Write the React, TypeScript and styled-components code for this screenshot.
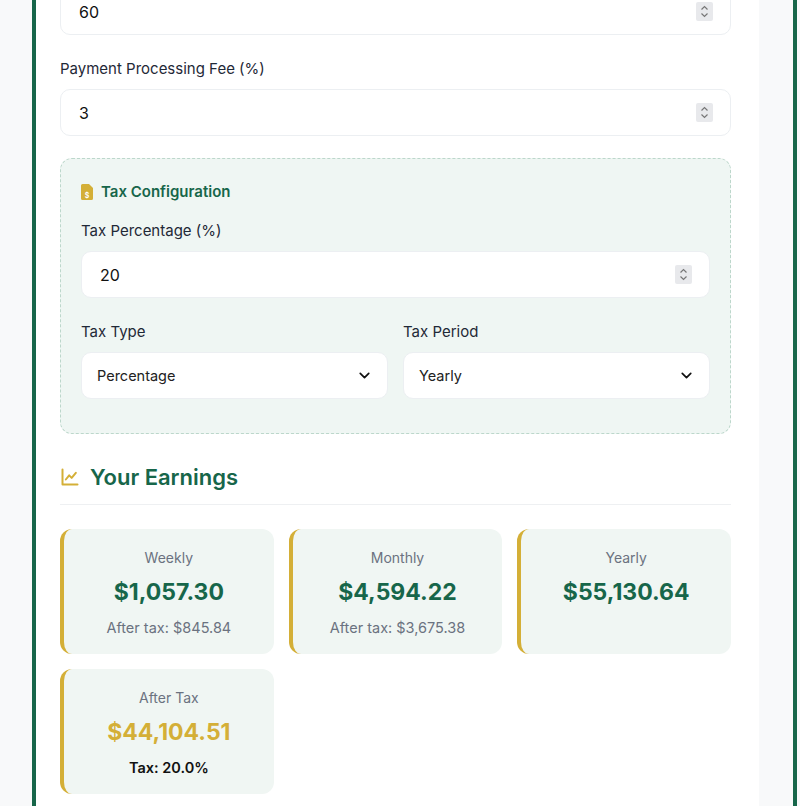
import styled, { createGlobalStyle } from 'styled-components'

const Global = createGlobalStyle`
  body { margin: 0; background: #f8f9fa; font-family: Inter, "Noto Sans", sans-serif; color: #1f2937; }
`

const Frame = styled.div`
  margin: -12px 3px 0 32px;
  border-left: 4px solid #17664a;
  border-right: 4px solid #17664a;
  background: #f8f9fa;
`

const Card = styled.div`
  background: #fff;
  margin-right: 34px;
  padding: 0 28px 0 24px;
  height: 830px;
  overflow: hidden;
`

const Field = styled.div<{ $gap?: number }>`
  margin-bottom: ${p => p.$gap ?? 22}px;
`

const Label = styled.div`
  font-size: 15px;
  font-weight: 400;
  color: #1f2937;
  margin-bottom: 11px;
`

const InputBox = styled.div`
  height: 47px;
  box-sizing: border-box;
  border: 1px solid #eceff2;
  border-radius: 10px;
  background: #fff;
  display: flex;
  align-items: center;
  justify-content: space-between;
  padding: 0 17px 0 18px;
  font-size: 16px;
  color: #111;
`

const Spinner = styled.span`
  width: 17px;
  height: 19px;
  background: #e8e9ec;
  border-radius: 2px;
  display: flex;
  align-items: center;
  justify-content: center;
`

const TaxBox = styled.div`
  background: #eff6f3;
  border: 1px dashed #bcd7cb;
  border-radius: 12px;
  padding: 23px 20px 34px;
`

const TaxTitle = styled.div`
  display: flex;
  align-items: center;
  gap: 8px;
  color: #17664a;
  font-weight: 600;
  font-size: 15px;
  margin-bottom: 20px;
`

const Cols = styled.div`
  display: grid;
  grid-template-columns: 1fr 1fr;
  gap: 15px;
`

const SelectBox = styled(InputBox)`
  padding: 0 14px 0 15px;
  font-size: 14.5px;
  color: #222;
`

const Heading = styled.div`
  display: flex;
  align-items: center;
  gap: 10px;
  margin-top: 30px;
  padding-bottom: 14px;
  border-bottom: 1px solid #eef0f2;
  color: #17664a;
  font-size: 22px;
  font-weight: 600;
`

const Grid = styled.div`
  display: grid;
  grid-template-columns: repeat(3, 1fr);
  gap: 15px;
  margin-top: 24px;
`

const Stat = styled.div`
  height: 125px;
  box-sizing: border-box;
  background: #f0f6f3;
  border-left: 4px solid #d4af37;
  border-radius: 12px;
  text-align: center;
  padding-top: 20px;
`

const StatLabel = styled.div`
  font-size: 14px;
  color: #6b7280;
`

const StatValue = styled.div<{ $gold?: boolean }>`
  font-size: 23px;
  font-weight: 700;
  color: ${p => (p.$gold ? '#d4af37' : '#17664a')};
  margin-top: 12px;
`

const StatSub = styled.div<{ $strong?: boolean }>`
  font-size: 14.5px;
  margin-top: 13px;
  color: ${p => (p.$strong ? '#111' : '#6b7280')};
  font-weight: ${p => (p.$strong ? 600 : 400)};
`

const Buttons = styled.div`
  display: flex;
  gap: 11px;
  margin-top: 24px;
`

const Btn = styled.div<{ $primary?: boolean; $w: number }>`
  width: ${p => p.$w}px;
  height: 40px;
  border-radius: 10px;
  box-sizing: border-box;
  background: ${p => (p.$primary ? '#17664a' : '#fff')};
  border: 1px solid ${p => (p.$primary ? '#17664a' : '#9fb8ae')};
`

const Spin = () => (
  <Spinner>
    <svg width="9" height="13" viewBox="0 0 9 13" fill="none" stroke="#777" strokeWidth="1.2">
      <path d="M1.5 4.5 4.5 1.5 7.5 4.5M1.5 8.5 4.5 11.5 7.5 8.5" />
    </svg>
  </Spinner>
)

const Chevron = () => (
  <svg width="17" height="17" viewBox="0 0 24 24" fill="none" stroke="#111" strokeWidth="2.4" strokeLinecap="round" strokeLinejoin="round">
    <path d="m6 9 6 6 6-6" />
  </svg>
)

const stats = [
  { label: 'Weekly', value: '$1,057.30', sub: 'After tax: $845.84' },
  { label: 'Monthly', value: '$4,594.22', sub: 'After tax: $3,675.38' },
  { label: 'Yearly', value: '$55,130.64' },
]

export default function App() {
  return (
    <>
      <Global />
      <Frame>
        <Card>
          <Field $gap={24}>
            <InputBox>60<Spin /></InputBox>
          </Field>
          <Field>
            <Label>Payment Processing Fee (%)</Label>
            <InputBox>3<Spin /></InputBox>
          </Field>
          <TaxBox>
            <TaxTitle>
              <svg width="12" height="16" viewBox="0 0 12 16">
                <path d="M1.5 0H8l4 4v10.5A1.5 1.5 0 0 1 10.5 16h-9A1.5 1.5 0 0 1 0 14.5v-13A1.5 1.5 0 0 1 1.5 0z" fill="#d4af37" />
                <text x="6" y="13.5" fontSize="7" textAnchor="middle" fill="#fff" fontFamily="Inter">$</text>
              </svg>
              Tax Configuration
            </TaxTitle>
            <Field $gap={24}>
              <Label>Tax Percentage (%)</Label>
              <InputBox>20<Spin /></InputBox>
            </Field>
            <Cols>
              <div>
                <Label>Tax Type</Label>
                <SelectBox>Percentage<Chevron /></SelectBox>
              </div>
              <div>
                <Label>Tax Period</Label>
                <SelectBox>Yearly<Chevron /></SelectBox>
              </div>
            </Cols>
          </TaxBox>
          <Heading>
            <svg width="20" height="20" viewBox="0 0 24 24" fill="none" stroke="#d4af37" strokeWidth="2.4" strokeLinecap="round" strokeLinejoin="round">
              <path d="M3 3v18h18" />
              <path d="m7 15 4-5 3 3 5-6" />
            </svg>
            Your Earnings
          </Heading>
          <Grid>
            {stats.map(s => (
              <Stat key={s.label}>
                <StatLabel>{s.label}</StatLabel>
                <StatValue>{s.value}</StatValue>
                {s.sub && <StatSub>{s.sub}</StatSub>}
              </Stat>
            ))}
            <Stat>
              <StatLabel>After Tax</StatLabel>
              <StatValue $gold>$44,104.51</StatValue>
              <StatSub $strong>Tax: 20.0%</StatSub>
            </Stat>
          </Grid>
          <Buttons>
            <Btn $primary $w={176} />
            <Btn $w={182} />
            <Btn $w={175} />
          </Buttons>
        </Card>
      </Frame>
    </>
  )
}
